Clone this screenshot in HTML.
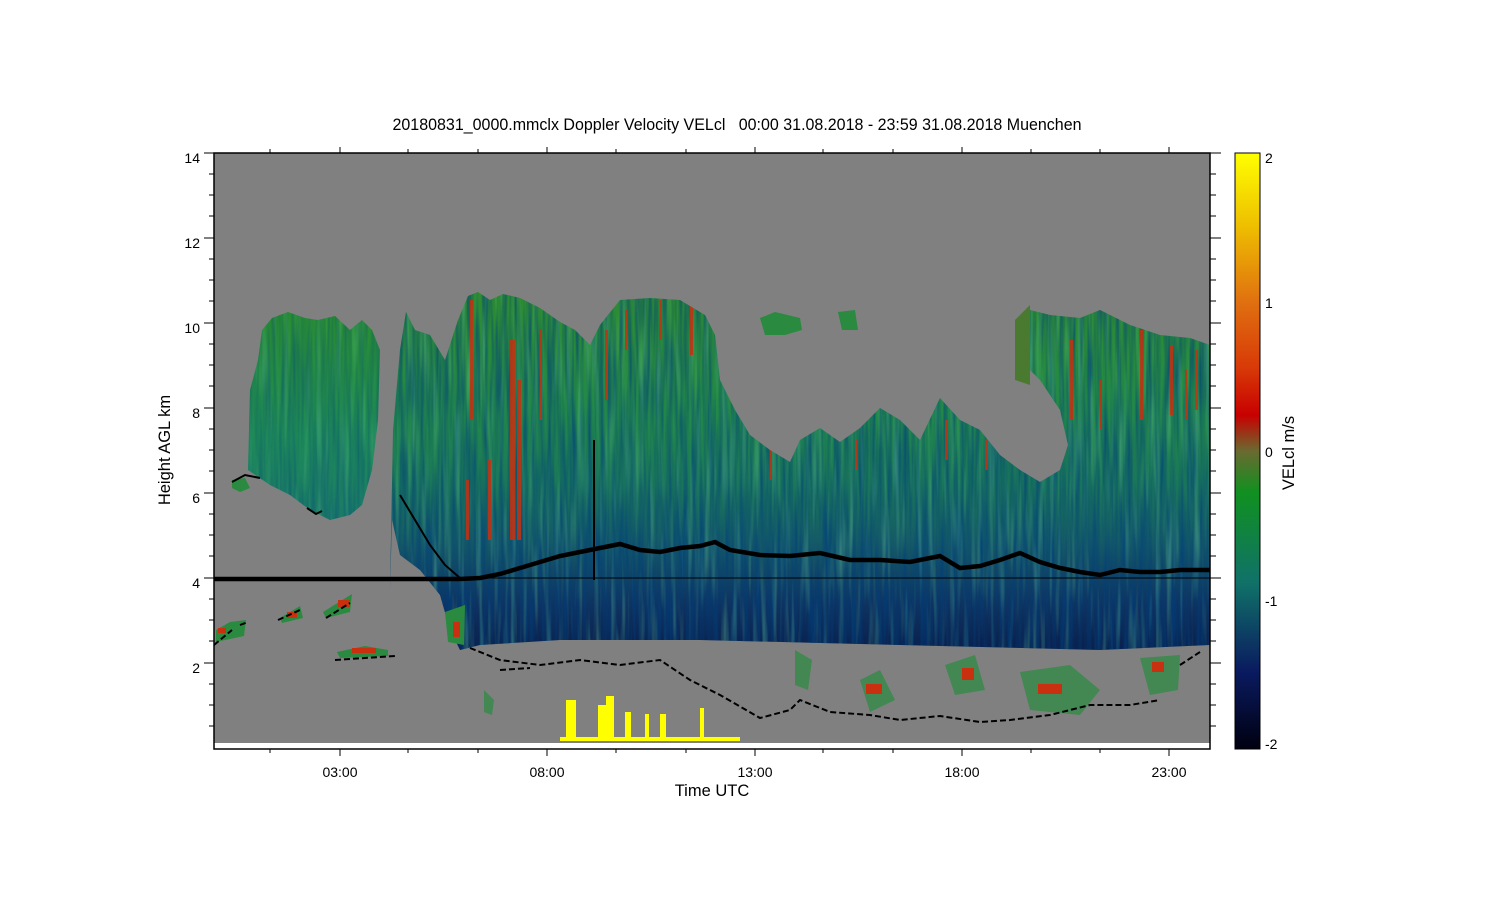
<!DOCTYPE html>
<html><head><meta charset="utf-8"><style>
html,body{margin:0;padding:0;background:#fff;width:1500px;height:900px;overflow:hidden}
svg{display:block}
text{font-family:"Liberation Sans",sans-serif;font-size:14px;fill:#000}
.big{font-size:16.5px}
</style></head><body>
<svg width="1500" height="900" viewBox="0 0 1500 900" xmlns="http://www.w3.org/2000/svg">
<defs>
<linearGradient id="cb" x1="0" y1="0" x2="0" y2="1">
<stop offset="0" stop-color="#ffff00"/>
<stop offset="0.12" stop-color="#eec000"/>
<stop offset="0.25" stop-color="#e07010"/>
<stop offset="0.36" stop-color="#d83a08"/>
<stop offset="0.44" stop-color="#c80000"/>
<stop offset="0.5" stop-color="#6a6a30"/>
<stop offset="0.57" stop-color="#109020"/>
<stop offset="0.72" stop-color="#107268"/>
<stop offset="0.87" stop-color="#0a1a60"/>
<stop offset="1" stop-color="#000010"/>
</linearGradient>
<linearGradient id="main" x1="0" y1="290" x2="0" y2="645" gradientUnits="userSpaceOnUse">
<stop offset="0" stop-color="#2e8c30"/>
<stop offset="0.35" stop-color="#22884a"/>
<stop offset="0.55" stop-color="#1a765a"/>
<stop offset="0.72" stop-color="#145868"/>
<stop offset="0.88" stop-color="#0e3462"/>
<stop offset="1" stop-color="#0a2250"/>
</linearGradient>
<linearGradient id="lb" x1="0" y1="310" x2="0" y2="520" gradientUnits="userSpaceOnUse">
<stop offset="0" stop-color="#2a8e30"/>
<stop offset="0.6" stop-color="#1e8a58"/>
<stop offset="1" stop-color="#1a7a68"/>
</linearGradient>
<filter id="streak" x="0" y="0" width="100%" height="100%">
<feTurbulence type="fractalNoise" baseFrequency="0.25 0.012" numOctaves="2" seed="3"/>
<feColorMatrix type="matrix" values="0 0 0 0 0  0 0 0 0 0.05  0 0 0 0 0.2  0 0 0 -1.6 1.1"/>
</filter>
<filter id="streak2" x="0" y="0" width="100%" height="100%">
<feTurbulence type="fractalNoise" baseFrequency="0.18 0.01" numOctaves="2" seed="9"/>
<feColorMatrix type="matrix" values="0 0 0 0 0.15  0 0 0 0 0.6  0 0 0 0 0.3  0 0 0 -2 1.0"/>
</filter>
<clipPath id="mc"><path d="M390,590 L393,430 L400,350 L406,312 L415,330 L430,335 L445,360 L458,320 L468,296 L478,292 L490,300 L503,294 L520,298 L540,308 L560,322 L575,330 L590,345 L600,325 L620,300 L650,298 L680,300 L705,315 L715,335 L720,380 L735,410 L750,435 L770,450 L790,462 L800,440 L820,428 L840,442 L860,428 L880,408 L900,420 L920,440 L940,398 L960,420 L980,430 L1000,455 L1020,470 L1040,482 L1060,470 L1068,445 L1060,410 L1040,380 L1020,360 L1015,320 L1030,310 L1050,315 L1080,318 L1100,310 L1130,325 L1160,335 L1190,338 L1210,345 L1210,645 L1100,650 L900,645 L700,640 L560,640 L480,645 L460,650 L450,630 L440,595 L420,570 L400,555 L392,520 Z"/></clipPath>
<clipPath id="lc"><path d="M248,470 L250,390 L258,360 L262,330 L272,318 L288,312 L305,318 L318,320 L335,316 L350,330 L362,320 L372,330 L380,350 L378,420 L372,470 L362,505 L350,515 L330,520 L310,510 L290,495 L270,485 Z"/></clipPath>
<clipPath id="pc"><rect x="214" y="153" width="996" height="590"/></clipPath>
</defs>

<text x="737" y="130" text-anchor="middle" class="big" textLength="689" lengthAdjust="spacingAndGlyphs" xml:space="preserve">20180831_0000.mmclx Doppler Velocity VELcl   00:00 31.08.2018 - 23:59 31.08.2018 Muenchen</text>

<rect x="214" y="153" width="996" height="596" fill="#fff"/>
<rect x="214" y="153" width="996" height="590" fill="#808080"/>

<g clip-path="url(#pc)">
<g clip-path="url(#lc)">
<rect x="240" y="300" width="150" height="230" fill="url(#lb)"/>
<rect x="240" y="300" width="150" height="230" filter="url(#streak)" opacity="0.45"/>
<rect x="240" y="300" width="150" height="230" filter="url(#streak2)" opacity="0.4"/>
</g>
<path d="M232,480 L245,478 L250,488 L240,492 L232,488Z" fill="#2a8a40"/>
<g clip-path="url(#mc)">
<rect x="380" y="280" width="840" height="380" fill="url(#main)"/>
<rect x="380" y="280" width="840" height="380" filter="url(#streak)" opacity="0.8"/>
<rect x="380" y="280" width="840" height="380" filter="url(#streak2)" opacity="0.5"/>
<g fill="#c83010" opacity="0.85">
<rect x="510" y="340" width="5" height="200"/><rect x="517" y="380" width="4" height="160"/>
<rect x="470" y="300" width="3" height="120"/><rect x="488" y="460" width="3" height="80"/>
<rect x="466" y="480" width="3" height="60"/><rect x="540" y="330" width="2" height="90"/>
<rect x="605" y="330" width="3" height="70"/><rect x="625" y="310" width="2" height="40"/>
<rect x="660" y="300" width="2" height="40"/><rect x="690" y="305" width="3" height="50"/>
<rect x="1070" y="340" width="3" height="80"/><rect x="1140" y="330" width="3" height="90"/>
<rect x="1170" y="345" width="3" height="70"/><rect x="1195" y="350" width="3" height="60"/>
<rect x="1100" y="380" width="2" height="50"/><rect x="945" y="420" width="3" height="40"/>
<rect x="985" y="440" width="3" height="30"/><rect x="855" y="440" width="2" height="30"/>
<rect x="770" y="450" width="2" height="30"/><rect x="1185" y="370" width="2" height="50"/>
</g>
<rect x="593" y="440" width="2" height="140" fill="#000"/>
</g>
<path d="M760,318 L775,312 L800,318 L802,330 L785,335 L765,335Z" fill="#2a8a40"/>
<path d="M838,312 L855,310 L858,330 L842,330Z" fill="#2a8a40"/>
<path d="M1015,320 L1030,305 L1030,385 L1015,380Z" fill="#4a7a30"/>

<g fill="#2a8a40">
<path d="M216,630 L230,622 L246,620 L244,636 L216,642Z"/>
<path d="M280,618 L300,606 L303,618 L282,623Z"/>
<path d="M323,612 L352,594 L350,612 L326,618Z"/>
<path d="M337,652 L365,646 L388,650 L388,656 L340,658Z"/>
<path d="M445,612 L465,605 L464,645 L448,642Z"/>
<path d="M484,690 L494,700 L492,715 L484,712Z" opacity="0.7"/>
<path d="M795,650 L812,660 L808,690 L795,685Z" opacity="0.7"/>
<path d="M860,680 L880,670 L895,700 L870,712Z" opacity="0.7"/>
<path d="M945,665 L975,655 L985,690 L955,695Z" opacity="0.7"/>
<path d="M1020,672 L1070,665 L1100,690 L1080,715 L1030,710Z" opacity="0.7"/>
<path d="M1140,658 L1180,655 L1178,690 L1150,695Z" opacity="0.7"/>
</g>
<g fill="#c83010">
<rect x="287" y="612" width="10" height="6"/><rect x="338" y="600" width="12" height="7"/>
<rect x="352" y="648" width="24" height="5"/><rect x="453" y="622" width="7" height="15"/>
<rect x="866" y="684" width="16" height="10"/><rect x="962" y="668" width="12" height="12"/>
<rect x="1038" y="684" width="24" height="10"/><rect x="1152" y="662" width="12" height="10"/>
<rect x="218" y="628" width="8" height="5"/>
</g>
<g fill="#ffff00">
<rect x="566" y="700" width="10" height="40"/><rect x="598" y="705" width="16" height="35"/>
<rect x="606" y="696" width="8" height="20"/><rect x="625" y="712" width="6" height="28"/>
<rect x="645" y="714" width="4" height="26"/><rect x="660" y="714" width="6" height="26"/>
<rect x="700" y="708" width="4" height="32"/><rect x="560" y="737" width="180" height="4"/>
</g>

<g fill="none" stroke="#000">
<path d="M214,579 L460,579 L480,578 L500,574 L520,568 L540,562 L560,556 L580,552 L600,548 L620,544 L640,550 L660,552 L680,548 L700,546 L715,542 L730,550 L760,555 L790,556 L820,553 L850,560 L880,560 L910,562 L940,556 L960,568 L980,566 L1000,560 L1020,553 L1040,562 L1060,568 L1080,572 L1100,575 L1120,570 L1140,572 L1160,572 L1180,570 L1210,570" stroke-width="4.5"/>
<path d="M214,578 L1210,578" stroke-width="1"/>
<path d="M232,482 L245,475 L260,478" stroke-width="2"/>
<path d="M307,508 L316,514 L322,511" stroke-width="2"/>
<path d="M400,495 L415,520 L430,545 L445,565 L460,578" stroke-width="2"/>
<path d="M214,645 L232,630 M240,625 L248,622 M278,620 L300,610 M326,618 L350,603 M335,660 L395,656 M470,648 L500,660 L540,665 L580,660 L620,665 L660,660 L690,680 L720,695 L760,718 L790,710 L800,700 L830,712 L870,715 L900,720 L940,716 L980,722 L1010,720 L1050,715 L1090,705 L1130,705 L1160,700 M500,670 L530,668 M1180,665 L1200,652" stroke-width="2" stroke-dasharray="6 3"/>
</g>
</g>

<rect x="214" y="153" width="996" height="596" fill="none" stroke="#000" stroke-width="1.5"/>
<g stroke="#000" stroke-width="1">
<path d="M204,153 H214 M204,238 H214 M204,323 H214 M204,408 H214 M204,493 H214 M204,578 H214 M204,663 H214
M209,174 H214 M209,195 H214 M209,216 H214 M209,259 H214 M209,280 H214 M209,301 H214 M209,344 H214 M209,365 H214 M209,386 H214 M209,429 H214 M209,450 H214 M209,471 H214 M209,514 H214 M209,535 H214 M209,556 H214 M209,599 H214 M209,620 H214 M209,641 H214 M209,684 H214 M209,705 H214 M209,726 H214"/>
<path d="M1210,153 H1221 M1210,238 H1221 M1210,323 H1221 M1210,408 H1221 M1210,493 H1221 M1210,578 H1221 M1210,663 H1221
M1210,174 H1216 M1210,195 H1216 M1210,216 H1216 M1210,259 H1216 M1210,280 H1216 M1210,301 H1216 M1210,344 H1216 M1210,365 H1216 M1210,386 H1216 M1210,429 H1216 M1210,450 H1216 M1210,471 H1216 M1210,514 H1216 M1210,535 H1216 M1210,556 H1216 M1210,599 H1216 M1210,620 H1216 M1210,641 H1216 M1210,684 H1216 M1210,705 H1216 M1210,726 H1216"/>
<path d="M340,147 V153 M547,147 V153 M755,147 V153 M962,147 V153 M1169,147 V153
M270,149 V153 M408,149 V153 M478,149 V153 M616,149 V153 M686,149 V153 M823,149 V153 M893,149 V153 M1031,149 V153 M1100,149 V153"/>
<path d="M340,749 V756 M547,749 V756 M755,749 V756 M962,749 V756 M1169,749 V756
M270,749 V753 M408,749 V753 M478,749 V753 M616,749 V753 M686,749 V753 M823,749 V753 M893,749 V753 M1031,749 V753 M1100,749 V753"/>
</g>
<g text-anchor="end">
<text x="200" y="163">14</text><text x="200" y="248">12</text><text x="200" y="333">10</text>
<text x="200" y="418">8</text><text x="200" y="503">6</text><text x="200" y="588">4</text><text x="200" y="673">2</text>
</g>
<g text-anchor="middle">
<text x="340" y="777">03:00</text><text x="547" y="777">08:00</text><text x="755" y="777">13:00</text>
<text x="962" y="777">18:00</text><text x="1169" y="777">23:00</text>
<text x="712" y="796" class="big">Time UTC</text>
</g>
<text transform="translate(170,450) rotate(-90)" text-anchor="middle" class="big">Height AGL km</text>

<rect x="1235" y="153" width="25" height="596" fill="url(#cb)" stroke="#000" stroke-width="1"/>
<text x="1265" y="163">2</text><text x="1265" y="308">1</text><text x="1265" y="457">0</text>
<text x="1265" y="606">-1</text><text x="1265" y="749">-2</text>
<text transform="translate(1294,453) rotate(-90)" text-anchor="middle" class="big">VELcl m/s</text>
</svg>
</body></html>
